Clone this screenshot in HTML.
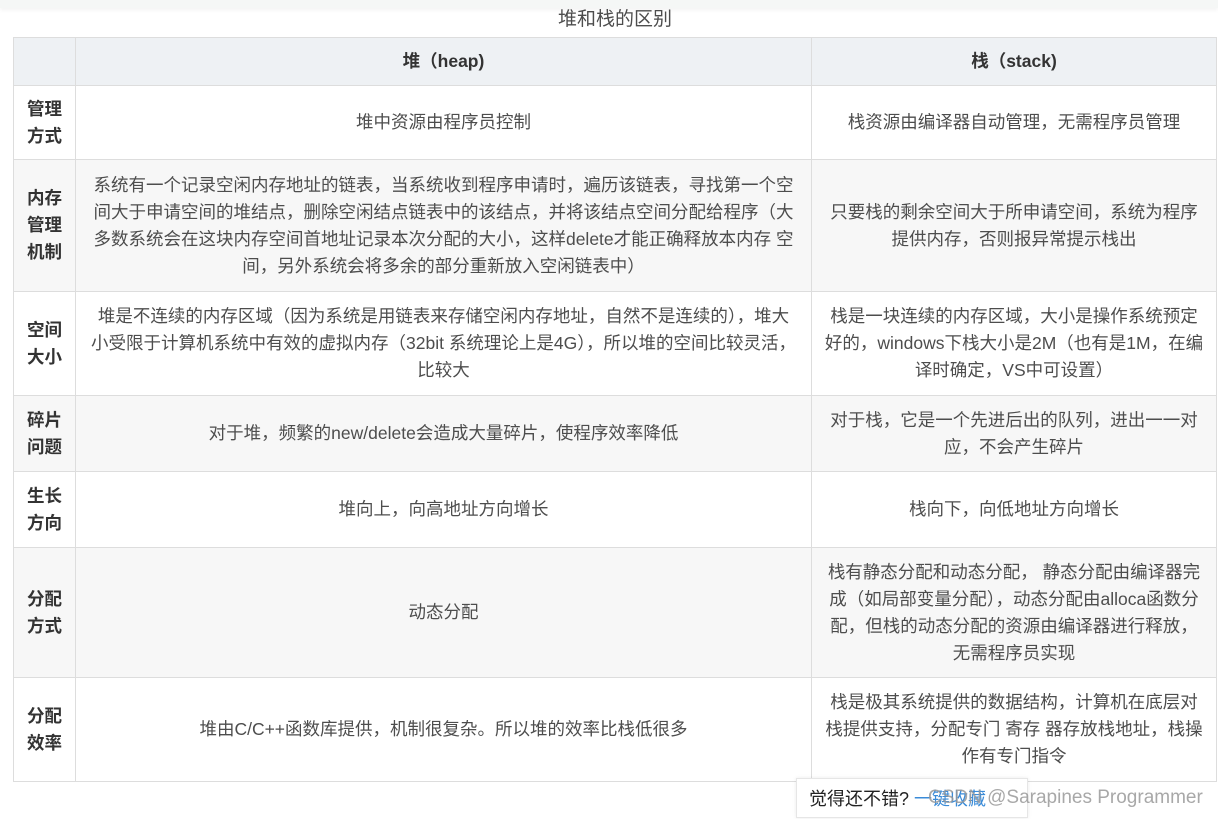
<!DOCTYPE html>
<html><head><meta charset="utf-8"><style>
body{margin:0;width:1218px;height:819px;background:#fff;font-family:"Liberation Sans","Noto Sans CJK SC",sans-serif;color:#4d4d4d;overflow:hidden;position:relative}
.top{position:absolute;left:0;top:0;width:1218px;height:8px;background:#f5f7f6;box-shadow:0 2px 4px rgba(0,0,0,.05)}
.cap{position:absolute;top:7px;left:0;width:1230px;text-align:center;font-size:19px;line-height:26px;color:#4d4d4d}
table{position:absolute;left:13px;top:37px;border-collapse:collapse;table-layout:fixed;font-size:17.5px;line-height:27px}
td,th{border:1px solid #ddd;text-align:center;padding:0 4px;vertical-align:middle;white-space:nowrap}
th{background:#eef1f4;font-weight:bold;height:47px;color:#333}
td.h{font-weight:bold;color:#333;padding:0 4px}
tr.g td{background:#f7f7f7}
.tip{position:absolute;left:796px;top:778px;width:232px;height:40px;background:#fff;border:1px solid #e6e6e6;box-shadow:0 0 4px rgba(0,0,0,.08);font-size:18px;line-height:40px;padding-left:12px;box-sizing:border-box;color:#222}
.tip span{color:#3a8bd8}
.wm{position:absolute;left:928px;top:787px;font-size:19px;color:#999;opacity:.85}
</style></head><body>
<div class="top"></div>
<div class="cap">堆和栈的区别</div>
<table>
<colgroup><col style="width:62px"><col style="width:736px"><col style="width:405px"></colgroup>
<tr><th></th><th>堆（heap)</th><th>栈（stack)</th></tr>
<tr style="height:74px"><td class="h">管理<br>方式</td><td>堆中资源由程序员控制</td><td>栈资源由编译器自动管理，无需程序员管理</td></tr>
<tr class="g" style="height:132px"><td class="h">内存<br>管理<br>机制</td><td>系统有一个记录空闲内存地址的链表，当系统收到程序申请时，遍历该链表，寻找第一个空<br>间大于申请空间的堆结点，删除空闲结点链表中的该结点，并将该结点空间分配给程序（大<br>多数系统会在这块内存空间首地址记录本次分配的大小，这样delete才能正确释放本内存 空<br>间，另外系统会将多余的部分重新放入空闲链表中）</td><td>只要栈的剩余空间大于所申请空间，系统为程序<br>提供内存，否则报异常提示栈出</td></tr>
<tr style="height:104px"><td class="h">空间<br>大小</td><td>堆是不连续的内存区域（因为系统是用链表来存储空闲内存地址，自然不是连续的），堆大<br>小受限于计算机系统中有效的虚拟内存（32bit 系统理论上是4G），所以堆的空间比较灵活，<br>比较大</td><td>栈是一块连续的内存区域，大小是操作系统预定<br>好的，windows下栈大小是2M（也有是1M，在编<br>译时确定，VS中可设置）</td></tr>
<tr class="g" style="height:76px"><td class="h">碎片<br>问题</td><td>对于堆，频繁的new/delete会造成大量碎片，使程序效率降低</td><td>对于栈，它是一个先进后出的队列，进出一一对<br>应，不会产生碎片</td></tr>
<tr style="height:76px"><td class="h">生长<br>方向</td><td>堆向上，向高地址方向增长</td><td>栈向下，向低地址方向增长</td></tr>
<tr class="g" style="height:130px"><td class="h">分配<br>方式</td><td>动态分配</td><td>栈有静态分配和动态分配， 静态分配由编译器完<br>成（如局部变量分配），动态分配由alloca函数分<br>配，但栈的动态分配的资源由编译器进行释放，<br>无需程序员实现</td></tr>
<tr style="height:104px"><td class="h">分配<br>效率</td><td>堆由C/C++函数库提供，机制很复杂。所以堆的效率比栈低很多</td><td>栈是极其系统提供的数据结构，计算机在底层对<br>栈提供支持，分配专门 寄存 器存放栈地址，栈操<br>作有专门指令</td></tr>
</table>
<div class="tip">觉得还不错? <span>一键收藏</span></div>
<div class="wm">CSDN @Sarapines Programmer</div>
</body></html>
